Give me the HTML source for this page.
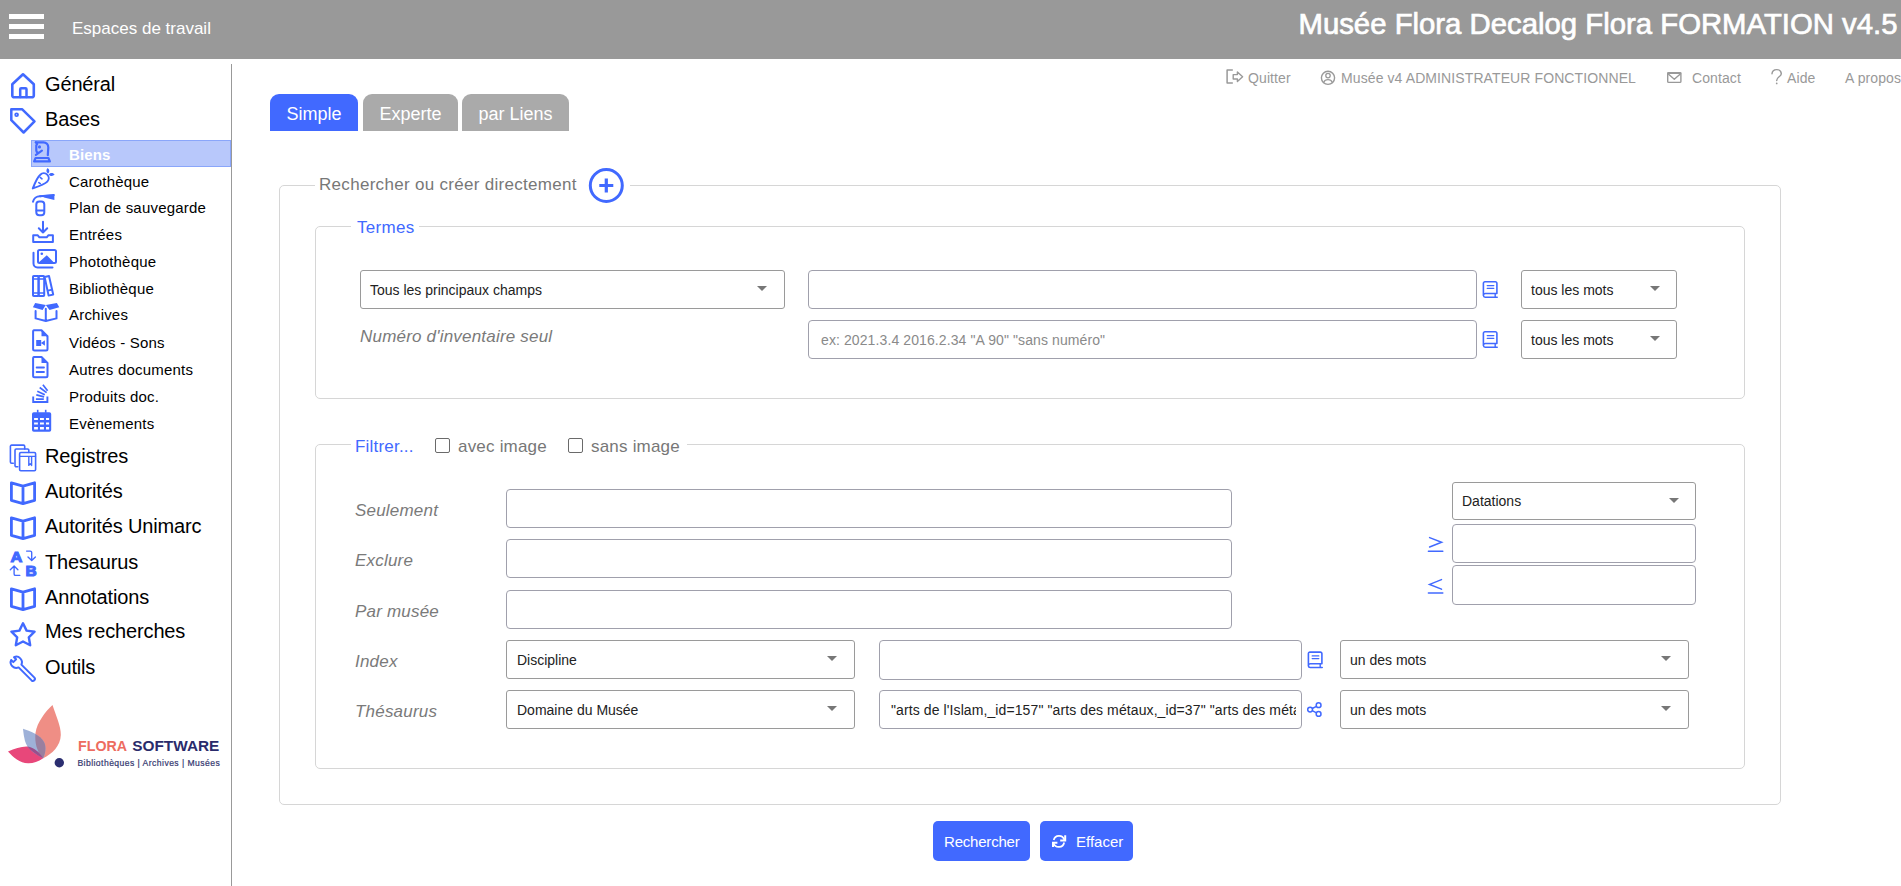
<!DOCTYPE html>
<html><head><meta charset="utf-8">
<style>
*{box-sizing:border-box;margin:0;padding:0}
html,body{width:1901px;height:886px;overflow:hidden;background:#fff;font-family:"Liberation Sans",sans-serif;color:#000}
.abs{position:absolute;white-space:nowrap}
#hdr{position:absolute;left:0;top:0;width:1901px;height:59px;background:#999999}
.bar{position:absolute;left:9px;width:35px;height:5px;background:#fff}
#esp{position:absolute;left:72px;top:19.5px;font-size:17px;line-height:17px;color:#fff;white-space:nowrap}
#title{position:absolute;right:3px;top:9px;font-size:29px;line-height:30px;transform:scaleX(1.011);transform-origin:right center;font-weight:normal;-webkit-text-stroke:0.7px #fff;color:#fff;white-space:nowrap}
#vline{position:absolute;left:231px;top:64px;width:1px;height:822px;background:#999}
.m1{position:absolute;left:45px;font-size:20px;line-height:20px;white-space:nowrap;letter-spacing:-0.15px}
.m2{position:absolute;left:69px;font-size:15px;line-height:15px;letter-spacing:0.2px;white-space:nowrap}
#sel{position:absolute;left:31px;top:140px;width:200px;height:27px;background:#b8c8fb;border:1px solid #8aa6fa}
.lnk{position:absolute;top:71px;font-size:14px;line-height:14px;color:#999;white-space:nowrap;letter-spacing:0.1px}
.tab{position:absolute;top:94px;height:37px;border-radius:9px 9px 0 0;color:#fff;font-size:18px;text-align:center;line-height:40px}
.fs{position:absolute;border:1px solid #d6d6d6;border-radius:5px}
.leg{position:absolute;background:#fff;white-space:nowrap}
.inp{position:absolute;border:1px solid #a0a0ac;border-radius:4px;background:#fff;font-size:14px;line-height:14px;color:#222;white-space:nowrap;overflow:hidden}
.sl{border-color:#9a9a9a;border-radius:3px}
.caret{position:absolute;width:0;height:0;border-left:5px solid transparent;border-right:5px solid transparent;border-top:5px solid #777}
.lbl{position:absolute;font-style:italic;color:#7a7a7a;font-size:17px;line-height:17px;white-space:nowrap;letter-spacing:0.2px}
.btn{position:absolute;top:821px;height:40px;background:#4169ff;border-radius:5px;color:#fff;font-size:15px;line-height:15px}
</style></head><body>
<div id="hdr">
  <div class="bar" style="top:14px"></div>
  <div class="bar" style="top:24px"></div>
  <div class="bar" style="top:34px"></div>
  <div id="esp">Espaces de travail</div>
  <div id="title">Musée Flora Decalog Flora FORMATION v4.5</div>
</div>
<div id="vline"></div>
<div id="sel"></div>

<!-- SIDEBAR_TEXT -->
<div class="m1" style="top:74px">Général</div>
<div class="m1" style="top:109px">Bases</div>
<div class="m2" style="top:147px;color:#fff;font-weight:bold;letter-spacing:0.1px">Biens</div>
<div class="m2" style="top:174px">Carothèque</div>
<div class="m2" style="top:200px">Plan de sauvegarde</div>
<div class="m2" style="top:227px">Entrées</div>
<div class="m2" style="top:253.7px">Photothèque</div>
<div class="m2" style="top:280.8px">Bibliothèque</div>
<div class="m2" style="top:307.4px">Archives</div>
<div class="m2" style="top:335px">Vidéos - Sons</div>
<div class="m2" style="top:361.7px">Autres documents</div>
<div class="m2" style="top:388.7px">Produits doc.</div>
<div class="m2" style="top:415.7px">Evènements</div>
<div class="m1" style="top:446px">Registres</div>
<div class="m1" style="top:481px">Autorités</div>
<div class="m1" style="top:516px">Autorités Unimarc</div>
<div class="m1" style="top:552px">Thesaurus</div>
<div class="m1" style="top:586.5px">Annotations</div>
<div class="m1" style="top:621px">Mes recherches</div>
<div class="m1" style="top:657px">Outils</div>

<svg class="abs" style="left:0;top:0" width="232" height="700" viewBox="0 0 232 700">
<g fill="none" stroke="#4169ff" stroke-linecap="round" stroke-linejoin="round">
 <!-- house -->
 <path d="M12.3 84.2L23 74.3L33.8 84.2V95.4A1.9 1.9 0 0 1 31.9 97.3H14.2A1.9 1.9 0 0 1 12.3 95.4Z" stroke-width="2.6"/>
 <path d="M20.2 97V89.2A1 1 0 0 1 21.2 88.2H25.5A1 1 0 0 1 26.5 89.2V97" stroke-width="2.5"/>
 <!-- tag -->
 <path d="M11.3 109.2H22L34.5 121.4L23.6 132.5L11.3 120.2Z" stroke-width="2.5"/>
 <circle cx="16.6" cy="114.8" r="1.4" stroke-width="1.8"/>
 <!-- knight -->
 <path d="M35.8 142.3H43.4A5 5 0 0 1 48.3 147.5L47.8 155.1" stroke-width="2.2"/>
 <path d="M35.8 142.3L37.2 143.9L36.3 145.3V150.6Q36.4 152 37.6 152.6" stroke-width="2.2"/>
 <path d="M41.9 150.7L35.9 154.9" stroke-width="2.2"/>
 <path d="M35.6 158H48.4L49.9 161.4H34.1Z" stroke-width="2.2"/>
 <circle cx="39.5" cy="146.9" r="0.7" stroke-width="1.7"/>
 <!-- carrot -->
 <path d="M32.8 188.4C32.8 188.4 37 177.5 40.3 174.7A4.9 4.9 0 0 1 47.3 181.6C44.4 184.5 32.8 188.4 32.8 188.4Z" stroke-width="2"/>
 <path d="M40.2 177.4L42 178.8M38.8 182.6L40.3 183.6" stroke-width="1.6"/>
 <!-- extinguisher -->
 <rect x="36.3" y="201.5" width="8" height="13.8" rx="3" stroke-width="2"/>
 <path d="M36.5 210.5H44" stroke-width="1.8"/>
 <path d="M33 201.8C33.6 198.6 36.5 196 40.3 196.2" stroke-width="2"/>
 <path d="M40.3 196.2L53.8 195.1" stroke-width="2"/>
 <!-- entrees -->
 <path d="M43 221.8V232.5M38.8 228.3L43 232.5L47.2 228.3" stroke-width="2"/>
 <path d="M33.2 235.3H37.8L39.4 237.3H46.7L48.3 235.3H52.9V242H33.2Z" stroke-width="2"/>
 <!-- phototheque -->
 <rect x="38" y="250" width="18" height="13" rx="1.5" stroke-width="2"/>
 <path d="M33.5 252.8V263.5A4 4 0 0 0 37.5 267.5H52.5" stroke-width="2"/>
 <!-- bibliotheque -->
 <rect x="33" y="276" width="5.6" height="20" rx="0.8" stroke-width="2"/>
 <rect x="38.6" y="276" width="5.6" height="20" rx="0.8" stroke-width="2"/>
 <path d="M33 279H44.2M33 293H44.2" stroke-width="1.6"/>
 <path d="M44.6 277L49 276L53.2 294.5L48.6 295.6Z" stroke-width="2"/>
 <path d="M47.8 290.6L52.2 289.6" stroke-width="1.6"/>
 <!-- archives box -->
 <path d="M35.6 311V318.4L45.8 321L56.5 318.4V311M45.8 308.8V320.6" stroke-width="2"/>
 <!-- video file -->
 <path d="M34 330.2H41.5L47.5 336.2V349A1.5 1.5 0 0 1 46 350.5H34.6A1.5 1.5 0 0 1 33.1 349V331.5A1.3 1.3 0 0 1 34 330.2Z" stroke-width="2"/>
 <!-- doc file -->
 <path d="M34 356.9H41.5L47.5 362.9V375.7A1.5 1.5 0 0 1 46 377.2H34.6A1.5 1.5 0 0 1 33.1 375.7V358.2A1.3 1.3 0 0 1 34 356.9Z" stroke-width="2"/>
 <path d="M36.6 367.5H44M36.6 372H44" stroke-width="1.8"/>
 <!-- produits: stack -->
 <path d="M33.2 396.4V402H47.4V396.4" stroke-width="1.9" stroke-linecap="butt" stroke-linejoin="miter"/>
 <path d="M35.9 399.1H43.8M36.3 394.9L44.1 396.8M37.3 391.3L44.8 394.7M39.7 387.5L46.6 392.6M42.9 384.7L47.6 390.8" stroke-width="1.7" stroke-linecap="butt"/>
 <!-- registres -->
 <path d="M13.3 463.2H11.6A1.2 1.2 0 0 1 10.4 462V446.3A1.2 1.2 0 0 1 11.6 445.1H23.5A1.2 1.2 0 0 1 24.7 446.3V449" stroke-width="1.6"/>
 <path d="M17.8 466.8H16.2A1.2 1.2 0 0 1 15 465.6V450.2A1.2 1.2 0 0 1 16.2 449H27.6A1.2 1.2 0 0 1 28.8 450.2V452.5" stroke-width="1.6"/>
 <rect x="19.6" y="452.5" width="16" height="18.3" rx="1.2" stroke-width="1.6"/>
 <path d="M19.6 456.3H35.6" stroke-width="1.2"/>
 <path d="M28.8 457V465.4L30.2 463.8L31.6 465.4V457" stroke-width="1.4"/>
 <!-- books (autorites, unimarc, annotations) -->
 <path d="M11.4 482.8L23 486.2L34.6 482.8V500.4L23 503.6L11.4 500.4Z M23 486.2V503.4" stroke-width="2.8"/>
 <path d="M11.4 517.8L23 521.2L34.6 517.8V535.4L23 538.6L11.4 535.4Z M23 521.2V538.4" stroke-width="2.8"/>
 <path d="M11.4 588.8L23 592.2L34.6 588.8V606.4L23 609.6L11.4 606.4Z M23 592.2V609.4" stroke-width="2.8"/>
 <!-- thesaurus arrows -->
 <path d="M26.6 551.1H30.2A1.5 1.5 0 0 1 31.7 552.6V560M28 556.9L31.7 560.6L35.4 556.9" stroke-width="1.35"/>
 <path d="M19.8 575.4H15.6A1.5 1.5 0 0 1 14.1 573.9V566.6M10.3 569.7L14.1 565.9L17.9 569.7" stroke-width="1.35"/>
 <!-- star -->
 <path d="M23 623.3L26.6 630.6L34.6 631.7L28.8 637.3L30.2 645.2L23 641.5L15.8 645.2L17.2 637.3L11.4 631.7L19.4 630.6Z" stroke-width="2.4"/>
 <!-- wrench -->
 <path d="M21.41 664.59L34.41 677.59A2 2 0 0 1 31.59 680.41L18.59 667.41A5.6 5.6 0 0 1 11.18 660.02L13.3 662.1L16.1 659.3L14.02 657.18A5.6 5.6 0 0 1 21.41 664.59Z" stroke-width="2"/>
</g>
<g fill="#4169ff" stroke="none">
 <!-- carrot leaves -->
 <path d="M47.6 167.9C45.8 169.6 46 172.3 48.2 173.6C49.8 171.8 49.8 169.4 47.6 167.9Z"/>
 <path d="M48.8 174.4C50.5 172.5 53.4 172.6 54.6 174.6C53 176.4 50.3 176.4 48.8 174.4Z"/>
 <!-- extinguisher nozzle -->
 <path d="M40.5 195.2L54.4 194.6V200L44 197.6Z"/>
 <!-- photo mountain -->
 <path d="M39.2 262L46.8 255.2L53.4 262Z"/>
 <circle cx="41.8" cy="253.7" r="1.3"/>
 <!-- archive flaps -->
 <path d="M32.9 307.3L35.2 303.1L45.8 305L42.6 310Z"/>
 <path d="M45.8 305L56.9 303.1L59.3 307.3L49.5 310Z"/>
 <!-- video corner + camera -->
 <path d="M41.5 330.2V336.2H47.5Z"/>
 <path d="M36.2 340H41.2V346.1H36.2ZM41 343L44.9 340.3V345.8Z"/>
 <path d="M41.5 356.9V362.9H47.5Z"/>
 <!-- calendar -->
 <path d="M33.8 412.2H49.4A1.8 1.8 0 0 1 51.2 414V430A1.8 1.8 0 0 1 49.4 431.8H33.8A1.8 1.8 0 0 1 32 430V414A1.8 1.8 0 0 1 33.8 412.2Z M34.1 417.9V420H37.9V417.9Z M40 417.9V420H43.9V417.9Z M46 417.9V420H49.1V417.9Z M34.1 422.4V424.5H37.9V422.4Z M40 422.4V424.5H43.9V422.4Z M46 422.4V424.5H49.1V422.4Z M34.1 427V429.4H37.9V427Z M40 427V429.4H43.9V427Z M46 427V429.4H49.1V427Z" fill-rule="evenodd"/>
 <rect x="36.9" y="409.8" width="1.6" height="3"/>
 <rect x="44.9" y="409.8" width="1.6" height="3"/>
 <!-- thesaurus letters -->
 <text x="10.6" y="561.6" font-family="Liberation Sans" font-weight="bold" font-size="15.5" stroke="#4169ff" stroke-width="1.1" transform="translate(10.6 561.6) scale(1.06 1) translate(-10.6 -561.6)">A</text>
 <text x="25.6" y="576.1" font-family="Liberation Sans" font-weight="bold" font-size="15.5" stroke="#4169ff" stroke-width="1.1">B</text>
</g>
</svg>


<svg class="abs" style="left:0;top:700px" width="231" height="80" viewBox="0 700 231 80">
<defs>
<clipPath id="cS"><path d="M52.5 705C56 716 61 726 60.8 735C60.5 746 52 754 43.2 758.2C37 752 34.5 743 35.5 733C37 722 46 711 52.5 705Z"/></clipPath>
<clipPath id="cP"><path d="M8 751.4C15 748.5 22 746 28 746.5C35 748 40 753 43.2 758.2C38 761.5 33 763.5 28 763.3C20 763 13 757 8 751.4Z"/></clipPath>
</defs>
<path fill="#ef8e85" d="M52.5 705C56 716 61 726 60.8 735C60.5 746 52 754 43.2 758.2C37 752 34.5 743 35.5 733C37 722 46 711 52.5 705Z"/>
<path fill="#e8477a" d="M8 751.4C15 748.5 22 746 28 746.5C35 748 40 753 43.2 758.2C38 761.5 33 763.5 28 763.3C20 763 13 757 8 751.4Z"/>
<path fill="#9eb1d8" d="M23 728.8C30 731 40 735 44 742C46.5 747 45.5 753 43.2 758.2C35 754 27 749 25 741C24 737 23.3 733 23 728.8Z"/>
<path fill="#9a7f9f" clip-path="url(#cS)" d="M23 728.8C30 731 40 735 44 742C46.5 747 45.5 753 43.2 758.2C35 754 27 749 25 741C24 737 23.3 733 23 728.8Z"/>
<path fill="#9a4f8c" clip-path="url(#cP)" d="M23 728.8C30 731 40 735 44 742C46.5 747 45.5 753 43.2 758.2C35 754 27 749 25 741C24 737 23.3 733 23 728.8Z"/>
<circle cx="59.3" cy="762.8" r="4.7" fill="#2b2e70"/>
<text x="78" y="751" font-family="Liberation Sans" font-weight="bold" font-size="15.2" fill="#ed6c60" textLength="49" lengthAdjust="spacingAndGlyphs">FLORA</text>
<text x="132.3" y="751" font-family="Liberation Sans" font-weight="bold" font-size="15.2" fill="#2a2b6b" textLength="87" lengthAdjust="spacingAndGlyphs">SOFTWARE</text>
<text x="77.4" y="765.8" font-family="Liberation Sans" font-size="8.6" fill="#34376f" stroke="#34376f" stroke-width="0.2" textLength="142.3" lengthAdjust="spacing">Bibliothèques | Archives | Musées</text>
</svg>


<!-- top links -->
<div class="lnk" style="left:1248px">Quitter</div>
<div class="lnk" style="left:1341px">Musée v4 ADMINISTRATEUR FONCTIONNEL</div>
<div class="lnk" style="left:1692px">Contact</div>
<div class="lnk" style="left:1787px">Aide</div>
<div class="lnk" style="left:1845px">A propos</div>
<svg class="abs" style="left:1200px;top:60px" width="701" height="30" viewBox="1200 60 701 30">
<g fill="none" stroke="#999" stroke-linecap="round" stroke-linejoin="round">
 <path d="M1232.3 70.1H1227.1V83H1232.3" stroke-width="1.5"/>
 <path d="M1233.2 74.6H1237.4V71.9L1242.6 76.8L1237.4 81.6V79H1233.2Z" stroke-width="1.4"/>
 <circle cx="1328" cy="77.8" r="6.6" stroke-width="1.4"/>
 <circle cx="1328" cy="75.6" r="2.2" stroke-width="1.3"/>
 <path d="M1323.6 82.6A4.8 4.8 0 0 1 1332.4 82.6" stroke-width="1.3"/>
 <rect x="1667.7" y="72.8" width="13.2" height="9.6" rx="1" stroke-width="1.4"/>
 <path d="M1668.3 74L1674.3 79.2L1680.3 74" stroke-width="1.4"/>
 <path d="M1668 73.1H1680.6" stroke-width="1.8"/>
 <path d="M1772 73.8C1772.2 71 1774.3 69.6 1776.7 69.6C1779.3 69.6 1781.3 71.3 1781.3 73.7C1781.3 76.5 1776.7 77.2 1776.7 80.4" stroke-width="1.45"/>
 <path d="M1776.7 83.3V83.5" stroke-width="1.7"/>
</g>
</svg>


<!-- tabs -->
<div class="tab" style="left:270px;width:88px;background:#4169ff">Simple</div>
<div class="tab" style="left:363px;width:95px;background:#aaaaaa">Experte</div>
<div class="tab" style="left:462px;width:107px;background:#aaaaaa">par Liens</div>

<!-- outer fieldset -->
<div class="fs" style="left:279px;top:185px;width:1502px;height:620px"></div>
<div class="leg" style="left:315px;top:172px;width:315px;height:28px"></div>
<div class="abs" style="left:319px;top:176px;font-size:17px;line-height:17px;color:#777;letter-spacing:0.3px">Rechercher ou créer directement</div>
<svg class="abs" style="left:586px;top:165px" width="40" height="40" viewBox="0 0 40 40"><circle cx="20.3" cy="20.5" r="16" fill="none" stroke="#4169ff" stroke-width="3"/><path d="M20.3 13.5v14M13.3 20.5h14" stroke="#4169ff" stroke-width="3.2"/></svg>

<!-- termes -->
<div class="fs" style="left:315px;top:226px;width:1430px;height:173px"></div>
<div class="leg" style="left:351px;top:214px;width:68px;height:24px"></div>
<div class="abs" style="left:357px;top:219px;font-size:17px;line-height:17px;color:#4169ff;letter-spacing:0.3px">Termes</div>

<div class="inp sl" style="left:360px;top:270px;width:425px;height:39px;padding:12px 0 0 9px">Tous les principaux champs</div>
<div class="caret" style="left:757px;top:286px"></div>
<div class="inp" style="left:808px;top:270px;width:669px;height:39px"></div>
<div class="inp sl" style="left:1521px;top:270px;width:156px;height:39px;padding:11.5px 0 0 9px">tous les mots</div>
<div class="caret" style="left:1650px;top:286px"></div>
<div class="lbl" style="left:360px;top:328px">Numéro d'inventaire seul</div>
<div class="inp" style="left:808px;top:320px;width:669px;height:39px;padding:11.5px 0 0 12px;color:#8a8a8a;letter-spacing:0.1px">ex: 2021.3.4 2016.2.34 "A 90" "sans numéro"</div>
<div class="inp sl" style="left:1521px;top:320px;width:156px;height:39px;padding:11.5px 0 0 9px">tous les mots</div>
<div class="caret" style="left:1650px;top:336px"></div>

<!-- filtrer -->
<div class="fs" style="left:315px;top:444px;width:1430px;height:325px"></div>
<div class="leg" style="left:351px;top:432px;width:336px;height:24px"></div>
<div class="abs" style="left:355px;top:437.5px;font-size:17px;line-height:17px;color:#4169ff;letter-spacing:0.2px">Filtrer...</div>
<div class="abs" style="left:435px;top:438px;width:15px;height:15px;border:1px solid #6a6a6a;border-radius:2px;background:#fff"></div>
<div class="abs" style="left:458px;top:438px;font-size:17px;line-height:17px;color:#777;letter-spacing:0.2px">avec image</div>
<div class="abs" style="left:568px;top:438px;width:15px;height:15px;border:1px solid #6a6a6a;border-radius:2px;background:#fff"></div>
<div class="abs" style="left:591px;top:438px;font-size:17px;line-height:17px;color:#777;letter-spacing:0.2px">sans image</div>

<div class="lbl" style="left:355px;top:502px">Seulement</div>
<div class="inp" style="left:506px;top:489px;width:726px;height:39px"></div>
<div class="lbl" style="left:355px;top:552px">Exclure</div>
<div class="inp" style="left:506px;top:539px;width:726px;height:39px"></div>
<div class="lbl" style="left:355px;top:603px">Par musée</div>
<div class="inp" style="left:506px;top:590px;width:726px;height:39px"></div>

<div class="inp sl" style="left:1452px;top:482px;width:244px;height:38px;padding:11px 0 0 9px">Datations</div>
<div class="caret" style="left:1669px;top:498px"></div>
<svg class="abs" style="left:1420px;top:530px" width="30" height="70" viewBox="1420 530 30 70"><g fill="none" stroke="#4169ff" stroke-width="1.5" stroke-linecap="round"><path d="M1429.6 537.6L1441.6 542.3L1429.6 547M1428.4 551.2H1442.8"/><path d="M1441.5 579.6L1429.6 584.4L1441.5 589.1M1428.4 593H1442.8"/></g></svg>
<div class="inp" style="left:1452px;top:524px;width:244px;height:39px"></div>

<div class="inp" style="left:1452px;top:565px;width:244px;height:40px"></div>

<div class="lbl" style="left:355px;top:653px">Index</div>
<div class="inp sl" style="left:506px;top:640px;width:349px;height:39px;padding:12px 0 0 10px">Discipline</div>
<div class="caret" style="left:827px;top:656px"></div>
<div class="inp" style="left:879px;top:640px;width:423px;height:40px"></div>
<div class="inp sl" style="left:1340px;top:640px;width:349px;height:39px;padding:12px 0 0 9px">un des mots</div>
<div class="caret" style="left:1661px;top:656px"></div>
<div class="lbl" style="left:355px;top:703px">Thésaurus</div>
<div class="inp sl" style="left:506px;top:690px;width:349px;height:39px;padding:12px 0 0 10px">Domaine du Musée</div>
<div class="caret" style="left:827px;top:706px"></div>
<div class="inp" style="left:879px;top:690px;width:423px;height:39px"><div style="position:absolute;left:11px;right:5.5px;top:12px;height:18px;overflow:hidden;letter-spacing:0.1px">"arts de l'Islam,_id=157" "arts des métaux,_id=37" "arts des métaux"</div></div>
<div class="inp sl" style="left:1340px;top:690px;width:349px;height:39px;padding:12px 0 0 9px">un des mots</div>
<div class="caret" style="left:1661px;top:706px"></div>


<div class="btn" style="left:933px;width:97px"><span class="abs" style="left:11px;top:13px;letter-spacing:-0.2px">Rechercher</span></div>
<div class="btn" style="left:1040px;width:93px"><span class="abs" style="left:36px;top:13px">Effacer</span></div>
<svg class="abs" style="left:0;top:0" width="1901" height="886" viewBox="0 0 1901 886">
<defs>
 <g id="bk" fill="none" stroke="#4169ff" stroke-linecap="round" stroke-linejoin="round">
  <path d="M0.8 14.5V2.3A1.5 1.5 0 0 1 2.3 0.8H12.8A1.5 1.5 0 0 1 14.3 2.3V12.5H2.8A2 2 0 0 0 0.8 14.5A1.9 1.9 0 0 0 2.8 16.2H14.6" stroke-width="1.6"/>
  <path d="M12.6 12.6V16.1" stroke-width="1.4"/>
  <path d="M4.6 4.6H11.2M4.6 7.3H11.2" stroke-width="1.3"/>
 </g>
</defs>
<use href="#bk" x="1482.6" y="281"/>
<use href="#bk" x="1482.6" y="331"/>
<use href="#bk" x="1307.6" y="651.3"/>
<g fill="none" stroke="#4169ff" stroke-width="1.5">
 <circle cx="1310.1" cy="709.6" r="2.4"/>
 <circle cx="1318.6" cy="705.2" r="2.4"/>
 <circle cx="1318.6" cy="713.9" r="2.4"/>
 <path d="M1312.2 708.5L1316.5 706.3M1312.2 710.7L1316.5 712.8"/>
</g>
<g fill="none" stroke="#fff" stroke-width="1.7">
 <path d="M1053.7 840A5.5 5.5 0 0 1 1064.2 839.6"/>
 <path d="M1064.2 842.5A5.5 5.5 0 0 1 1053.6 843.2"/>
</g>
<g fill="none" stroke="#fff" stroke-width="2" stroke-linejoin="miter">
 <path d="M1065.2 835.2V840.4H1060.2"/>
 <path d="M1053 847V842.8H1057.4"/>
</g>
<path fill="#fff" d="M1065.2 838.6V840.4H1063.4Z"/>
</svg>

</body></html>
